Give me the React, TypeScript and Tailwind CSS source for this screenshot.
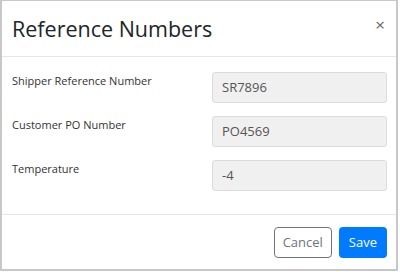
import React from "react";

function Row({ label, value }: { label: string; value: string }) {
  return (
    <div className="flex items-start">
      <div className="w-[200px] pt-[1px] text-[11px] text-[#333]">{label}</div>
      <div className="flex h-[31px] w-[175px] items-center rounded-[3px] border border-[#dcdcdc] bg-[#f0f0f0] pl-[9px] text-[13px] text-[#555]">
        {value}
      </div>
    </div>
  );
}

export default function App() {
  return (
    <div
      className="h-[272px] w-[400px] bg-white"
      style={{ fontFamily: '"Open Sans", "Noto Sans", sans-serif' }}
    >
      <div className="flex h-[271px] w-[398px] flex-col border-2 border-t border-[#c8c8c8]">
        <div className="flex h-[56px] items-center justify-between border-b border-[#e6e6e6] pl-[10px] pr-[11px]">
          <div className="text-[21.5px] leading-none text-[#212529]">Reference Numbers</div>
          <div className="-mt-[9px] text-[17px] leading-none text-[#666]">×</div>
        </div>
        <div className="flex flex-1 flex-col gap-[13px] border-b border-[#e6e6e6] pl-[10px] pt-[15px]">
          <Row label="Shipper Reference Number" value="SR7896" />
          <Row label="Customer PO Number" value="PO4569" />
          <Row label="Temperature" value="-4" />
        </div>
        <div className="flex h-[54px] items-center justify-end gap-[7px] pr-[9px] pt-[1px]">
          <button className="h-[31px] rounded-[4px] border border-[#6c757d] px-[8px] text-[13px] text-[#6c757d]">
            Cancel
          </button>
          <button className="h-[31px] rounded-[4px] bg-[#007bff] px-[10px] text-[13px] text-white">
            Save
          </button>
        </div>
      </div>
    </div>
  );
}
